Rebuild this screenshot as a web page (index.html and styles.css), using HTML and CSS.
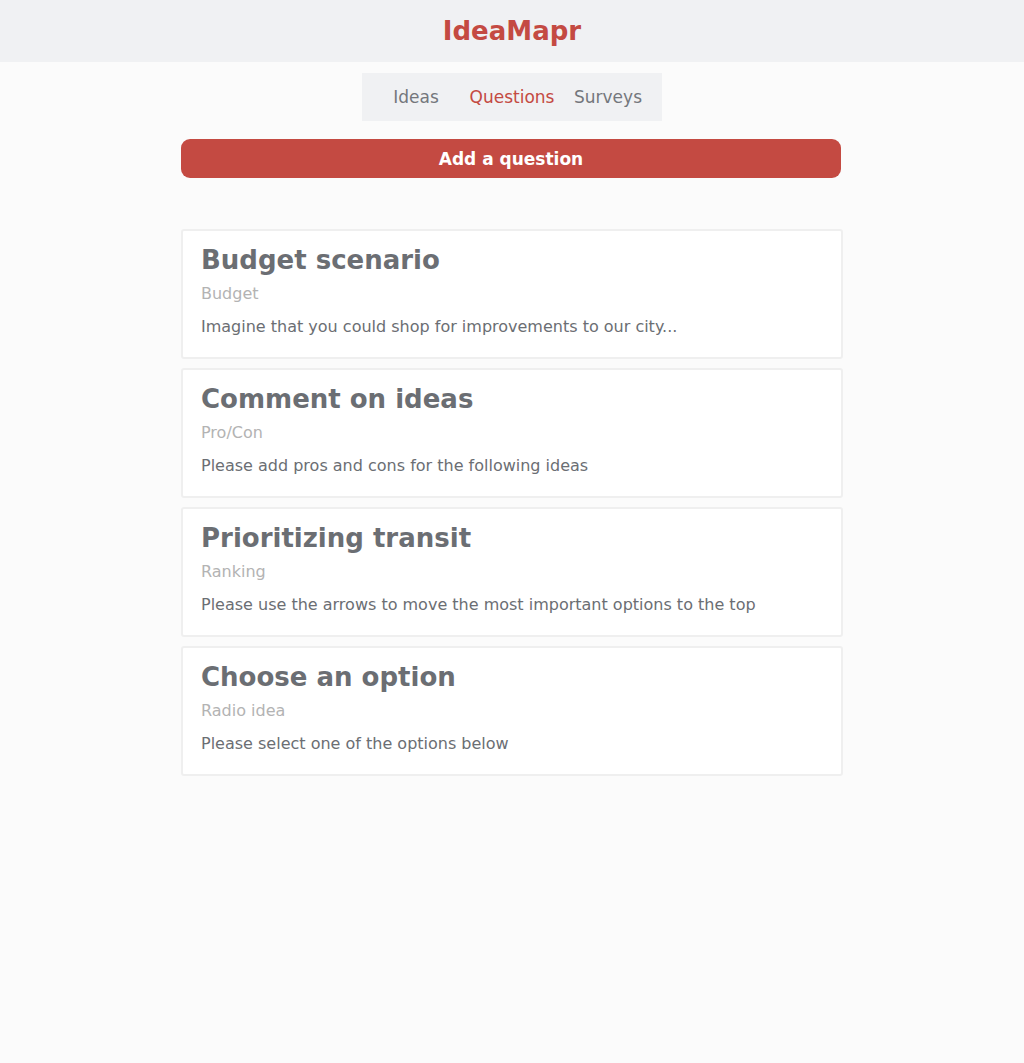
FILE: index.html
```html
<!DOCTYPE html>
<html lang="en">
<head>
<meta charset="utf-8">
<title>IdeaMapr</title>
<link rel="stylesheet" href="styles.css">
</head>
<body>
<header class="topbar">
  <h1 class="brand">IdeaMapr</h1>
</header>
<nav class="tabs">
  <a class="tab">Ideas</a>
  <a class="tab active">Questions</a>
  <a class="tab">Surveys</a>
</nav>
<main class="content">
  <button class="add-btn">Add a question</button>
  <section class="cards">
    <article class="card">
      <h2 class="card-title">Budget scenario</h2>
      <div class="card-type">Budget</div>
      <p class="card-desc">Imagine that you could shop for improvements to our city...</p>
    </article>
    <article class="card">
      <h2 class="card-title">Comment on ideas</h2>
      <div class="card-type">Pro/Con</div>
      <p class="card-desc">Please add pros and cons for the following ideas</p>
    </article>
    <article class="card">
      <h2 class="card-title">Prioritizing transit</h2>
      <div class="card-type">Ranking</div>
      <p class="card-desc">Please use the arrows to move the most important options to the top</p>
    </article>
    <article class="card">
      <h2 class="card-title">Choose an option</h2>
      <div class="card-type">Radio idea</div>
      <p class="card-desc">Please select one of the options below</p>
    </article>
  </section>
</main>
</body>
</html>
```
FILE: styles.css
```css
* { box-sizing: border-box; }
html, body { margin: 0; padding: 0; }
body {
  background: #fbfbfb;
  font-family: "DejaVu Sans", "Open Sans", sans-serif;
  color: #6b6e73;
  min-height: 1063px;
}
.topbar {
  height: 62px;
  background: #f0f1f3;
  display: flex;
  align-items: center;
  justify-content: center;
}
.brand {
  margin: 0;
  font-size: 26px;
  font-weight: 700;
  color: #c44a42;
}
.tabs {
  width: 300px;
  height: 48px;
  margin: 11px auto 0;
  padding: 0 6px;
  background: #f0f1f3;
  display: flex;
  align-items: center;
  justify-content: center;
}
.tab {
  width: 96px;
  text-align: center;
  font-size: 17px;
  font-weight: 400;
  color: #74777c;
  cursor: pointer;
}
.tab.active { color: #c44a42; }
.content {
  width: 662px;
  margin: 18px auto 0;
}
.add-btn {
  display: block;
  width: 660px;
  height: 39px;
  border: 0;
  border-radius: 9px;
  background: #c44a42;
  color: #ffffff;
  font-family: inherit;
  font-size: 17px;
  font-weight: 700;
  padding: 0;
}
.cards {
  margin-top: 51px;
  display: flex;
  flex-direction: column;
  gap: 9px;
}
.card {
  height: 130px;
  background: #ffffff;
  border: 2px solid #efefef;
  border-radius: 3px;
  padding: 12px 18px;
}
.card-title {
  margin: 0;
  font-size: 26px;
  font-weight: 700;
  line-height: 34px;
  color: #6b6e73;
}
.card-type {
  margin-top: 7px;
  font-size: 16px;
  line-height: 20px;
  color: #b3b3b3;
}
.card-desc {
  margin: 13px 0 0;
  font-size: 16px;
  line-height: 20px;
  color: #6b6e73;
}
```
